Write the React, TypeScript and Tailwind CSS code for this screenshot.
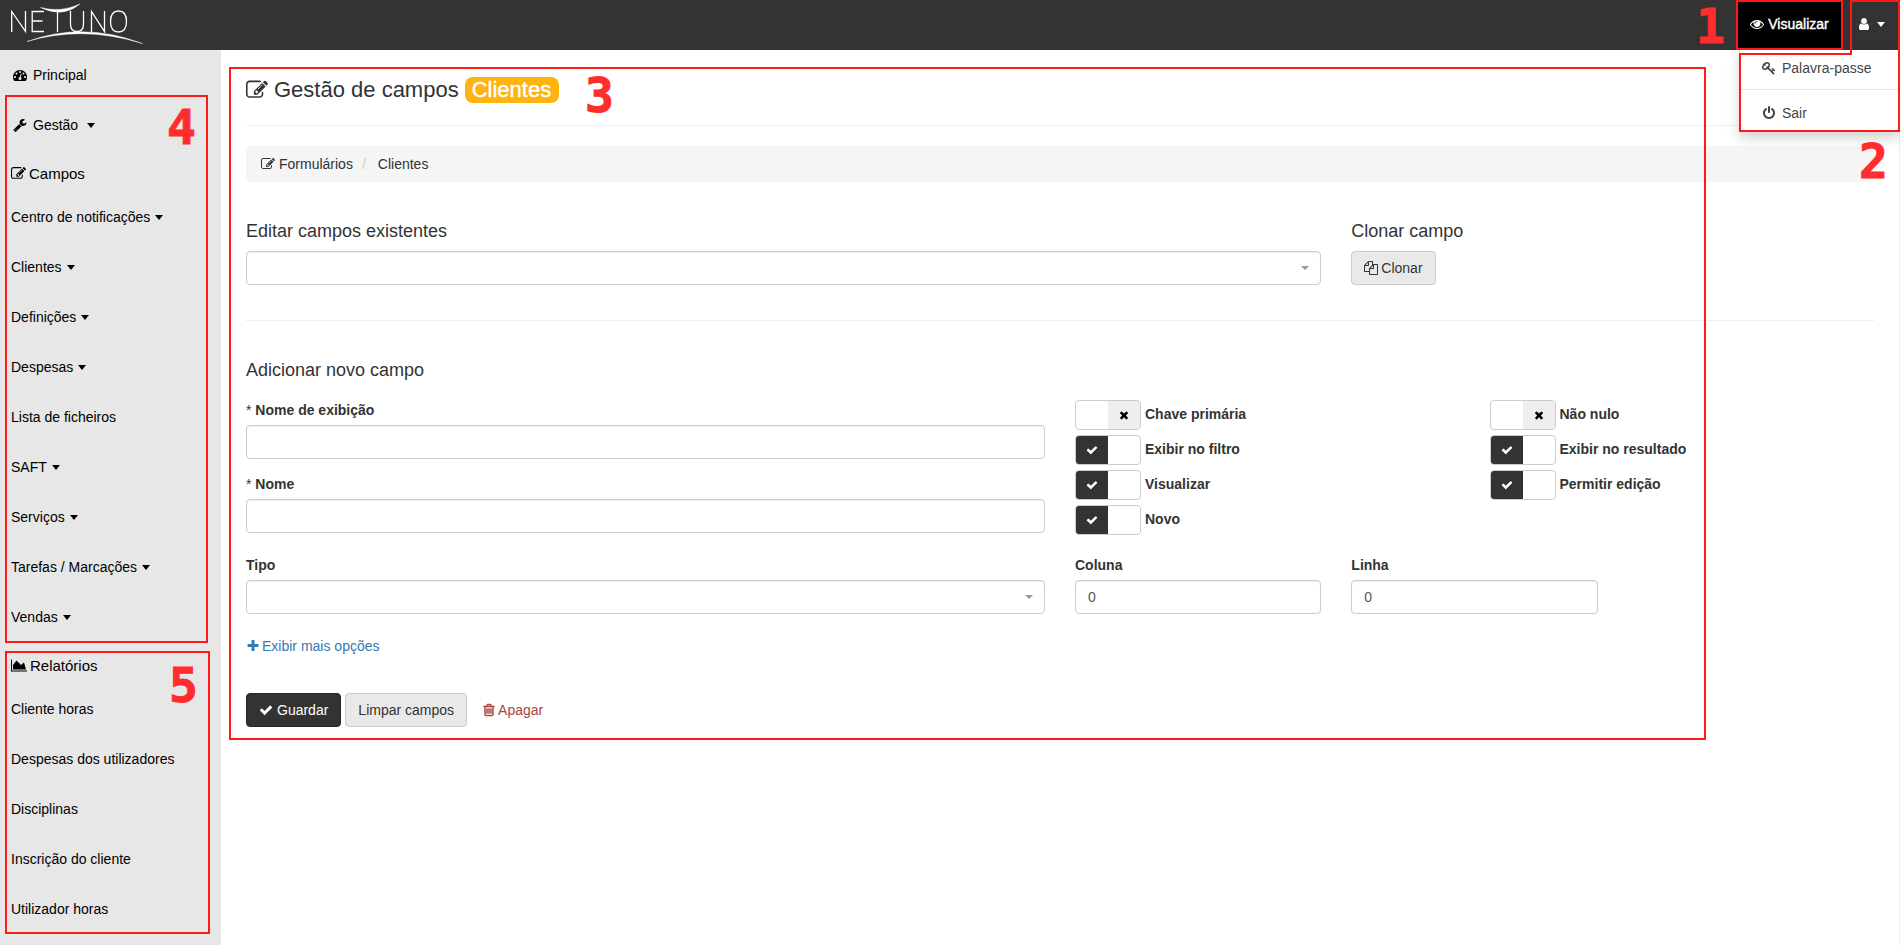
import type { ReactNode } from "react";

const paths = {
  tachometer:
    "M384 1152q0-53-37.5-90.5t-90.5-37.5-90.5 37.5-37.5 90.5 37.5 90.5 90.5 37.5 90.5-37.5 37.5-90.5zm192-448q0-53-37.5-90.5t-90.5-37.5-90.5 37.5-37.5 90.5 37.5 90.5 90.5 37.5 90.5-37.5 37.5-90.5zm428 481l101-382q6-26-7.5-48.5t-38.5-29.5-48 6.5-30 39.5l-101 382q-60 5-107 43.5t-63 98.5q-20 77 20 146t117 89 146-20 89-117q16-60-6-117t-72-91zm660-33q0-53-37.5-90.5t-90.5-37.5-90.5 37.5-37.5 90.5 37.5 90.5 90.5 37.5 90.5-37.5 37.5-90.5zm-640-640q0-53-37.5-90.5t-90.5-37.5-90.5 37.5-37.5 90.5 37.5 90.5 90.5 37.5 90.5-37.5 37.5-90.5zm448 192q0-53-37.5-90.5t-90.5-37.5-90.5 37.5-37.5 90.5 37.5 90.5 90.5 37.5 90.5-37.5 37.5-90.5zm320 448q0 261-141 483-19 29-54 29h-1402q-35 0-54-29-141-221-141-483 0-182 71-348t191-286 286-191 348-71 348 71 286 191 191 286 71 348z",
  edit: "M888 1184l116-116-152-152-116 116v56h96v96h56zm440-720q-16-16-33 1l-350 350q-17 17-1 33t33-1l350-350q17-17 1-33zm80 594v190q0 119-84.5 203.5t-203.5 84.5h-832q-119 0-203.5-84.5t-84.5-203.5v-832q0-119 84.5-203.5t203.5-84.5h832q63 0 117 25 15 7 18 23 3 17-9 29l-49 49q-14 14-32 8-23-6-45-6h-832q-66 0-113 47t-47 113v832q0 66 47 113t113 47h832q66 0 113-47t47-113v-126q0-13 9-22l64-64q15-15 35-7t20 29zm-96-738l288 288-672 672h-288v-288zm444 132l-92 92-288-288 92-92q28-28 68-28t68 28l152 152q28 28 28 68t-28 68z",
  wrench:
    "M448 1472q0-26-19-45t-45-19-45 19-19 45 19 45 45 19 45-19 19-45zm644-420l-682 682q-37 37-90 37-52 0-91-37l-106-108q-38-36-38-90 0-53 38-91l681-681q39 98 114.5 173.5t173.5 114.5zm634-435q0 39-23 106-47 134-164.5 217.5t-258.5 83.5q-185 0-316.5-131.5t-131.5-316.5 131.5-316.5 316.5-131.5q58 0 121.5 16.5t107.5 46.5q16 11 16 28t-16 28l-293 169v224l193 107q5-3 79-48.5t135.5-81 70.5-35.5q15 0 23.5 10t8.5 25z",
  eye: "M1664 960q-152-236-381-353 61 104 61 225 0 185-131.5 316.5t-316.5 131.5-316.5-131.5-131.5-316.5q0-121 61-225-229 117-381 353 133 205 333.5 326.5t434.5 121.5 434.5-121.5 333.5-326.5zm-720-384q0-20-14-34t-34-14q-125 0-214.5 89.5t-89.5 214.5q0 20 14 34t34 14 34-14 14-34q0-86 61-147t147-61q20 0 34-14t14-34zm848 384q0 34-20 69-140 230-376.5 368.5t-499.5 138.5-499.5-139-376.5-368q-20-35-20-69t20-69q140-229 376.5-368t499.5-139 499.5 139 376.5 368q20 35 20 69z",
  user: "M1536 1399q0 109-62.5 187t-150.5 78h-854q-88 0-150.5-78t-62.5-187q0-85 8.5-160.5t31.5-152 58.5-131 94-89 134.5-34.5q131 128 313 128t313-128q76 0 134.5 34.5t94 89 58.5 131 31.5 152 8.5 160.5zm-256-887q0 159-112.5 271.5t-271.5 112.5-271.5-112.5-112.5-271.5 112.5-271.5 271.5-112.5 271.5 112.5 112.5 271.5z",
  key: "M832 512q0-80-56-136t-136-56-136 56-56 136q0 42 19 83-41-19-83-19-80 0-136 56t-56 136 56 136 136 56 136-56 56-136q0-42-19-83 41 19 83 19 80 0 136-56t56-136zm851 704q0 17-49 66t-66 49q-9 0-28.5-16t-36.5-33-38.5-40-24.5-26l-96 96 220 220q28 28 28 68 0 42-39 81t-81 39q-40 0-68-28l-671-671q-176 131-365 131-163 0-265.5-102.5t-102.5-265.5q0-160 95-313t248-248 313-95q163 0 265.5 102.5t102.5 265.5q0 189-131 365l355 355 96-96q-3-3-26-24.5t-40-38.5-33-36.5-16-28.5q0-17 49-66t66-49q13 0 23 10 6 6 46 44.5t82 79.5 86.5 86 73 78 28.5 41z",
  power:
    "M1664 896q0 156-61 298t-164 245-245 164-298 61-298-61-245-164-164-245-61-298q0-182 80.5-343t226.5-270q43-32 95.5-25t83.5 50q32 42 24.5 94.5t-49.5 84.5q-98 74-151.5 181t-53.5 228q0 104 40.5 198.5t109.5 163.5 163.5 109.5 198.5 40.5 198.5-40.5 163.5-109.5 109.5-163.5 40.5-198.5q0-121-53.5-228t-151.5-181q-42-32-49.5-84.5t24.5-94.5q31-43 84-50t95 25q146 109 226.5 270t80.5 343zm-640-768v640q0 52-38 90t-90 38-90-38-38-90v-640q0-52 38-90t90-38 90 38 38 90z",
  files:
    "M1696 384q40 0 68 28t28 68v1216q0 40-28 68t-68 28h-960q-40 0-68-28t-28-68v-288h-544q-40 0-68-28t-28-68v-672q0-40 20-88t48-76l408-408q28-28 76-48t88-20h416q40 0 68 28t28 68v328q68-40 128-40h416zm-544 213l-299 299h299v-299zm-640-384l-299 299h299v-299zm196 647l316-316v-416h-384v416q0 40-28 68t-68 28h-416v640h512v-256q0-40 20-88t48-76zm956 804v-1152h-384v416q0 40-28 68t-68 28h-416v640h896z",
  check:
    "M1671 566q0 40-28 68l-724 724-136 136q-28 28-68 28t-68-28l-136-136-362-362q-28-28-28-68t28-68l136-136q28-28 68-28t68 28l294 295 656-657q28-28 68-28t68 28l136 136q28 28 28 68z",
  times:
    "M1490 1322q0 40-28 68l-136 136q-28 28-68 28t-68-28l-294-294-294 294q-28 28-68 28t-68-28l-136-136q-28-28-28-68t28-68l294-294-294-294q-28-28-28-68t28-68l136-136q28-28 68-28t68 28l294 294 294-294q28-28 68-28t68 28l136 136q28 28 28 68t-28 68l-294 294 294 294q28 28 28 68z",
  plus: "M1600 736v192q0 40-28 68t-68 28h-416v416q0 40-28 68t-68 28h-192q-40 0-68-28t-28-68v-416h-416q-40 0-68-28t-28-68v-192q0-40 28-68t68-28h416v-416q0-40 28-68t68-28h192q40 0 68 28t28 68v416h416q40 0 68 28t28 68z",
  trash:
    "M704 736v576q0 14-9 23t-23 9h-64q-14 0-23-9t-9-23v-576q0-14 9-23t23-9h64q14 0 23 9t9 23zm256 0v576q0 14-9 23t-23 9h-64q-14 0-23-9t-9-23v-576q0-14 9-23t23-9h64q14 0 23 9t9 23zm256 0v576q0 14-9 23t-23 9h-64q-14 0-23-9t-9-23v-576q0-14 9-23t23-9h64q14 0 23 9t9 23zm128 724v-948h-896v948q0 22 7 40.5t14.5 27 10.5 8.5h832q3 0 10.5-8.5t14.5-27 7-40.5zm-672-1076h448l-48-117q-7-9-17-11h-317q-10 2-17 11zm928 32v64q0 14-9 23t-23 9h-96v948q0 83-47 143.5t-113 60.5h-832q-66 0-113-58.5t-47-141.5v-952h-96q-14 0-23-9t-9-23v-64q0-14 9-23t23-9h309l70-167q15-37 54-63t79-26h320q40 0 79 26t54 63l70 167h309q14 0 23 9t9 23z",
  chart: "M2048 1536v128h-2048v-1536h128v1408h1920zm-384-1024l256 896h-1664v-576l448-576 576 576z",
};

function Icon({ name, className = "size-3.5", wide = false }: { name: keyof typeof paths; className?: string; wide?: boolean }) {
  return (
    <svg viewBox={wide ? "0 0 2048 1792" : "0 0 1792 1792"} className={`shrink-0 fill-current ${className}`} aria-hidden="true">
      <path d={paths[name]} />
    </svg>
  );
}

function Caret() {
  return <span aria-hidden="true" className="border-x-4 border-t-[5px] border-x-transparent border-t-current" />;
}

function Logo() {
  return (
    <svg viewBox="0 0 145 46" className="h-[46px] w-[145px]" fill="none" stroke="#fff" role="img" aria-label="Netuno">
      <path strokeWidth="1.3" d="M11.7 32V11.5L25.5 31.5V11M44 11.5H32.2V31.5H44M32.2 21H42.5M57.5 10V32M70.5 11V24q0 7.5 6.500 7.5t6.500-7.500V11M91.500 32V11.500L104.500 31.5V11M118.500 11q-8 0-8 10.500t8 10.500 8-10.500-8-10.500z" />
      <path fill="#fff" stroke="#fff" strokeWidth="0.4" d="M40.500 7.500q20 5.500 39.500-3.500q-17 14.500-39.500 3.500z" />
      <path fill="#fff" stroke="#fff" strokeWidth="0.4" d="M27 41.500q56-20.500 115.500 2q-60-18.500-115.500-2z" />
    </svg>
  );
}

const forms: [string, boolean][] = [
  ["Centro de notificações", true],
  ["Clientes", true],
  ["Definições", true],
  ["Despesas", true],
  ["Lista de ficheiros", false],
  ["SAFT", true],
  ["Serviços", true],
  ["Tarefas / Marcações", true],
  ["Vendas", true],
];
const reports = ["Cliente horas", "Despesas dos utilizadores", "Disciplinas", "Inscrição do cliente", "Utilizador horas"];

function NavItem({ label, caret = false }: { label: string; caret?: boolean }) {
  return (
    <li>
      <a href="#" className="flex h-[50px] items-center gap-[5px] pl-[11px]">
        {label}
        {caret && <Caret />}
      </a>
    </li>
  );
}

function NavHeading({ children }: { children: ReactNode }) {
  return (
    <h2 className="flex h-[42px] items-center gap-[3px] border-t border-[#ebebeb] pt-1 pl-[11px] text-[15px]">{children}</h2>
  );
}

const control =
  "h-[34px] w-full appearance-none rounded border border-[#ccc] bg-white px-3 text-sm text-[#555] shadow-[inset_0_1px_1px_rgba(0,0,0,0.075)] outline-none";

function Select({ id, label }: { id: string; label?: string }) {
  return (
    <div className="relative">
      <select id={id} aria-label={label} className={control} defaultValue="">
        <option value=""></option>
      </select>
      <span aria-hidden="true" className="pointer-events-none absolute top-[15px] right-3 border-x-4 border-t-4 border-x-transparent border-t-[#999]" />
    </div>
  );
}

function Label({ htmlFor, required = false, children }: { htmlFor: string; required?: boolean; children: ReactNode }) {
  return (
    <label htmlFor={htmlFor} className="mb-[5px] block text-sm leading-5 font-bold">
      {required && <span className="font-normal">* </span>}
      {children}
    </label>
  );
}

function Toggle({ id, label, on = false }: { id: string; label: string; on?: boolean }) {
  return (
    <div className="mb-[5px] flex h-[30px]">
      <label htmlFor={id} className="flex cursor-pointer gap-1 text-sm leading-7 font-bold">
        <input id={id} type="checkbox" defaultChecked={on} className="peer sr-only" />
        <span className="flex h-[30px] w-[66px] overflow-hidden rounded border border-[#ccc] bg-white">
          <span className={on ? "flex w-8 items-center justify-center bg-[#333] text-white" : "w-8"}>
            {on && <Icon name="check" className="size-3" />}
          </span>
          <span className={on ? "w-8" : "flex w-8 items-center justify-center bg-[#eee] text-black"}>
            {!on && <Icon name="times" className="size-3" />}
          </span>
        </span>
        {label}
      </label>
    </div>
  );
}

const digit =
  "pointer-events-none absolute z-20 font-['DejaVu_Sans_Mono',monospace] text-[48px] leading-none font-bold text-[#ff2d2d] [-webkit-text-stroke:1px_#ff2d2d]";
const frame = "pointer-events-none absolute z-20 border-2 border-[#ff1a1a]";

export default function App() {
  return (
    <div className="relative flex min-h-screen flex-col bg-white font-['Liberation_Sans',Arial,sans-serif] text-sm text-[#333]">
      <header className="relative flex h-[50px] justify-between bg-[#333] text-white">
        <a href="#" aria-label="Netuno">
          <Logo />
        </a>
        <nav className="flex">
          <button
            type="button"
            className="flex w-[107px] items-center justify-center gap-1 bg-black pb-0.5 [-webkit-text-stroke:0.4px_#fff]"
          >
            <Icon name="eye" />
            Visualizar
          </button>
          <button type="button" aria-label="Utilizador" className="flex w-[57px] items-center gap-1.5 pb-0.5 pl-3.5">
            <Icon name="user" />
            <Caret />
          </button>
        </nav>
        <ul className="absolute top-[50px] right-0 z-10 w-[161px] border-l border-[#ddd] bg-white text-[#444] shadow-[0_6px_12px_rgba(0,0,0,0.175)]">
          <li>
            <a href="#" className="flex h-10 items-center gap-1.5 border-b border-[#e5e5e5] pb-1 pl-[22px]">
              <Icon name="key" />
              Palavra-passe
            </a>
          </li>
          <li>
            <a href="#" className="flex h-[42px] items-center gap-1.5 pt-1 pl-[22px]">
              <Icon name="power" />
              Sair
            </a>
          </li>
        </ul>
      </header>

      <div className="flex grow">
        <aside className="w-[221px] shrink-0 bg-[#e7e7e7] text-black">
          <nav>
            <ul>
              <li>
                <a href="#" className="flex h-[50px] items-center gap-1.5 pl-[13px]">
                  <Icon name="tachometer" />
                  Principal
                </a>
              </li>
              <li>
                <a href="#" className="flex h-[50px] items-center gap-1.5 pl-[13px]">
                  <Icon name="wrench" />
                  Gestão
                  <span className="ml-[3px] flex">
                    <Caret />
                  </span>
                </a>
              </li>
            </ul>
            <NavHeading>
              <Icon name="edit" className="size-[15px]" />
              Campos
            </NavHeading>
            <ul>
              {forms.map(([label, caret]) => (
                <NavItem key={label} label={label} caret={caret} />
              ))}
            </ul>
            <NavHeading>
              <Icon name="chart" wide className="h-[15px] w-4" />
              Relatórios
            </NavHeading>
            <ul>
              {reports.map((label) => (
                <NavItem key={label} label={label} />
              ))}
            </ul>
          </nav>
        </aside>

        <main className="grow border-r border-[#eee] px-[25px] pt-[25px]">
          <h1 className="flex h-[30px] items-center gap-1.5 text-[22px] leading-[26px]">
            <Icon name="edit" className="size-[22px]" />
            Gestão de campos
            <span className="rounded-lg bg-[#ffb30f] pr-2 pl-[7px] text-white [-webkit-text-stroke:0.4px_#fff]">Clientes</span>
          </h1>
          <hr className="mt-5 border-[#eee]" />
          <nav className="mt-5 flex h-9 items-center rounded bg-[#f5f5f5] px-[15px]">
            <a href="#" className="flex items-center gap-1">
              <Icon name="edit" />
              Formulários
            </a>
            <span className="px-[9px] text-[#ccc]">/</span>
            <a href="#" className="pl-[3px]">
              Clientes
            </a>
          </nav>

          <section className="mt-[39px] grid grid-cols-12 gap-x-[30px]">
            <div className="col-span-8">
              <h2 className="mb-2.5 text-lg leading-5">Editar campos existentes</h2>
              <Select id="existing" label="Editar campos existentes" />
            </div>
            <div className="col-span-4">
              <h2 className="mb-2.5 text-lg leading-5">Clonar campo</h2>
              <button type="button" className="flex h-[34px] items-center gap-[3px] rounded border border-[#ccc] bg-[#e9e9e9] px-3">
                <Icon name="files" />
                Clonar
              </button>
            </div>
          </section>
          <hr className="mt-[35px] border-[#eee]" />

          <form className="mt-[39px]">
            <h2 className="text-lg leading-5">Adicionar novo campo</h2>
            <div className="mt-5 grid grid-cols-12 gap-x-[30px]">
              <div className="col-span-6">
                <Label htmlFor="display" required>
                  Nome de exibição
                </Label>
                <input id="display" type="text" className={control} />
                <div className="mt-[15px]">
                  <Label htmlFor="name" required>
                    Nome
                  </Label>
                  <input id="name" type="text" className={control} />
                </div>
              </div>
              <div className="col-span-3">
                <Toggle id="primary" label="Chave primária" />
                <Toggle id="filter" label="Exibir no filtro" on />
                <Toggle id="view" label="Visualizar" on />
                <Toggle id="new" label="Novo" on />
              </div>
              <div className="col-span-3">
                <Toggle id="notnull" label="Não nulo" />
                <Toggle id="result" label="Exibir no resultado" on />
                <Toggle id="editable" label="Permitir edição" on />
              </div>
            </div>
            <div className="mt-[15px] grid grid-cols-12 gap-x-[30px]">
              <div className="col-span-6">
                <Label htmlFor="type">Tipo</Label>
                <Select id="type" />
              </div>
              <div className="col-span-2">
                <Label htmlFor="column">Coluna</Label>
                <input id="column" type="text" defaultValue="0" className={control} />
              </div>
              <div className="col-span-2">
                <Label htmlFor="row">Linha</Label>
                <input id="row" type="text" defaultValue="0" className={control} />
              </div>
            </div>
            <a href="#" className="mt-[22px] flex w-fit items-center gap-0.5 leading-5 text-[#337ab7]">
              <Icon name="plus" />
              Exibir mais opções
            </a>
            <div className="mt-[37px] flex items-center gap-1">
              <button type="submit" className="flex h-[34px] items-center gap-1 rounded border border-[#262626] bg-[#333] px-3 text-white">
                <Icon name="check" />
                Guardar
              </button>
              <button type="reset" className="h-[34px] rounded border border-[#ccc] bg-[#e9e9e9] px-3">
                Limpar campos
              </button>
              <button type="button" className="flex h-[34px] items-center gap-0.5 px-[11px] text-[#a94442]">
                <Icon name="trash" className="size-3.5 stroke-current stroke-[60]" />
                Apagar
              </button>
            </div>
          </form>
        </main>
      </div>

      <div className={`${frame} top-0 right-[57px] h-[50px] w-[107px]`} />
      <div className={`${frame} top-[67px] right-[194px] left-[229px] h-[673px]`} />
      <div className={`${frame} top-[95px] left-[5px] h-[548px] w-[203px]`} />
      <div className={`${frame} top-[651px] left-[5px] h-[283px] w-[205px]`} />
      <svg className="pointer-events-none absolute top-0 right-0 z-20 h-[134px] w-[162px]" viewBox="0 0 162 134" fill="none" stroke="#ff1a1a" strokeWidth="2" aria-hidden="true">
        <path d="M161 1H113V54H2V131H161V51M161 1V51" />
      </svg>
      <span className={`${digit} top-0.5 right-[175px]`}>1</span>
      <span className={`${digit} top-[137px] right-[12px]`}>2</span>
      <span className={`${digit} top-[71px] left-[585px]`}>3</span>
      <span className={`${digit} top-[103px] left-[167px]`}>4</span>
      <span className={`${digit} top-[661px] left-[169px]`}>5</span>
    </div>
  );
}
